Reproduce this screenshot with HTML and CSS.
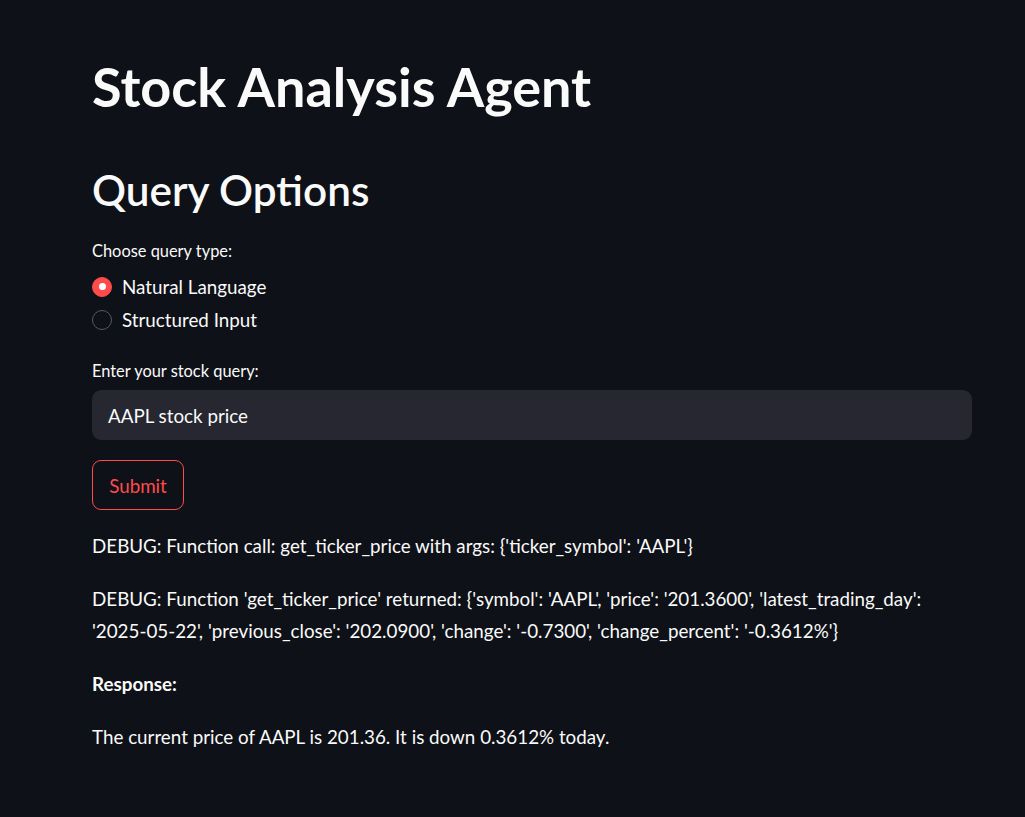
FILE: index.html
```html
<!DOCTYPE html>
<html lang="en">
<head>
<meta charset="utf-8">
<title>Stock Analysis Agent</title>
<link rel="stylesheet" href="styles.css">
</head>
<body>
<main class="block">
  <h1 class="title">Stock Analysis Agent</h1>
  <h2 class="subtitle">Query Options</h2>

  <div class="widget radio-widget">
    <div class="wlabel">Choose query type:</div>
    <div class="options">
      <div class="opt"><span class="circle checked"></span><span>Natural Language</span></div>
      <div class="opt"><span class="circle"></span><span>Structured Input</span></div>
    </div>
  </div>

  <div class="widget input-widget">
    <div class="wlabel">Enter your stock query:</div>
    <div class="inputbox">AAPL stock price</div>
  </div>

  <div class="btnrow"><button class="btn">Submit</button></div>

  <div class="output">
    <p>DEBUG: Function call: get_ticker_price with args: {'ticker_symbol': 'AAPL'}</p>
    <p class="nowrap">DEBUG: Function 'get_ticker_price' returned: {'symbol': 'AAPL', 'price': '201.3600', 'latest_trading_day':<br>'2025-05-22', 'previous_close': '202.0900', 'change': '-0.7300', 'change_percent': '-0.3612%'}</p>
    <p><strong>Response:</strong></p>
    <p>The current price of AAPL is 201.36. It is down 0.3612% today.</p>
  </div>
</main>
</body>
</html>
```

FILE: styles.css
```css
* { box-sizing: border-box; }

html, body {
  margin: 0;
  padding: 0;
  background: #0e1117;
  color: #fafafa;
  font-family: "Lato", "Noto Sans", sans-serif;
  height: 100%;
}

.block {
  width: 880px;
  margin-left: 92px;
  padding-top: 54px;
  display: flex;
  flex-direction: column;
}

.title {
  margin: 0;
  font-size: 54px;
  line-height: 66px;
  font-weight: 700;
}

.subtitle {
  margin: 43px 0 0;
  font-size: 42.3px;
  line-height: 54px;
  font-weight: 600;
}

.widget { display: flex; flex-direction: column; }

.wlabel {
  font-size: 16.4px;
  line-height: 22px;
}

.radio-widget { margin-top: 23px; }

.options {
  margin-top: 8px;
  display: flex;
  flex-direction: column;
}

.opt {
  height: 33px;
  display: flex;
  align-items: center;
  gap: 10px;
  font-size: 18.8px;
}

.circle {
  width: 20px;
  height: 20px;
  border-radius: 50%;
  border: 1.5px solid #56585f;
  display: flex;
  align-items: center;
  justify-content: center;
  flex: none;
}

.circle.checked {
  background: #ff4b4b;
  border-color: #ff4b4b;
}

.circle.checked::after {
  content: "";
  width: 7px;
  height: 7px;
  border-radius: 50%;
  background: #ffffff;
}

.input-widget { margin-top: 24px; }

.inputbox {
  margin-top: 8px;
  height: 50px;
  border-radius: 9px;
  background: #262730;
  display: flex;
  align-items: center;
  padding-left: 16px;
  font-size: 18.8px;
}

.btnrow { margin-top: 20px; display: flex; }

.btn {
  height: 50px;
  width: 92px;
  border: 1px solid #ff4b4b;
  border-radius: 9px;
  background: transparent;
  color: #ff4b4b;
  font-family: inherit;
  font-size: 18.8px;
  padding: 0;
}

.output {
  margin-top: 20px;
  display: flex;
  flex-direction: column;
  gap: 21px;
}

.output p {
  margin: 0;
  font-size: 18.8px;
  line-height: 32px;
}

.output p.nowrap { white-space: nowrap; }

.output strong { font-weight: 700; }
```
